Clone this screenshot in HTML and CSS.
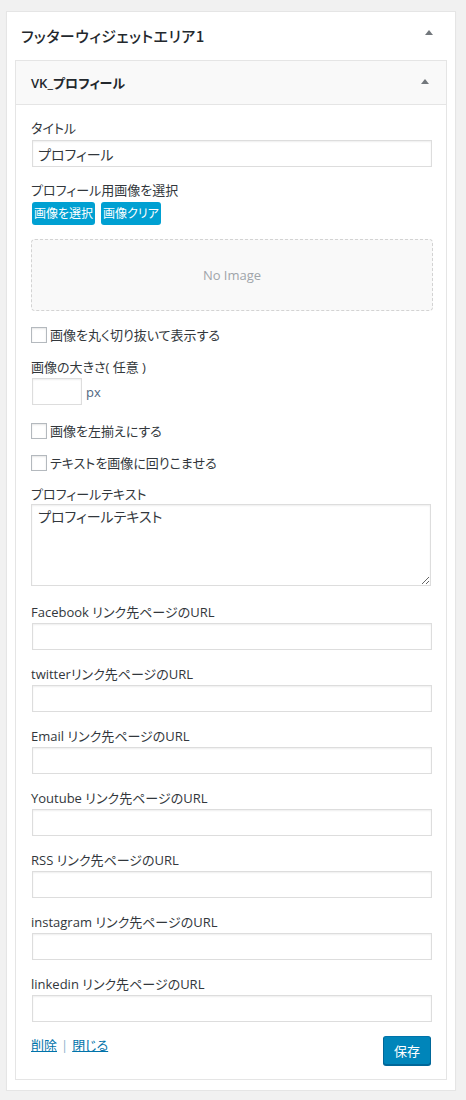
FILE: index.html
```html
<!DOCTYPE html>
<html lang="ja">
<head>
<meta charset="utf-8">
<title>フッターウィジェットエリア1</title>
<link rel="stylesheet" href="styles.css">
</head>
<body>
<div class="page">
  <div class="area">
    <div class="area-head">
      <h2 class="area-title">フッターウィジェットエリア1</h2>
      <span class="arrow arrow-area"></span>
    </div>
    <div class="widget">
      <div class="widget-head">
        <h3 class="widget-title">VK_プロフィール</h3>
        <span class="arrow arrow-widget"></span>
      </div>
      <div class="widget-body">
        <label class="lbl">タイトル</label>
        <input class="text mt3" type="text" value="プロフィール">

        <label class="lbl mt14">プロフィール用画像を選択</label>
        <div class="btns mt3">
          <button class="btn-blue">画像を選択</button>
          <button class="btn-blue">画像クリア</button>
        </div>

        <div class="noimage mt14">No Image</div>

        <label class="check mt16"><input type="checkbox"><span>画像を丸く切り抜いて表示する</span></label>

        <label class="lbl mt15">画像の大きさ( 任意 )</label>
        <div class="size-row mt2">
          <input class="text small" type="text">
          <span class="px">px</span>
        </div>

        <label class="check mt18"><input type="checkbox"><span>画像を左揃えにする</span></label>
        <label class="check mt16"><input type="checkbox"><span>テキストを画像に回りこませる</span></label>

        <label class="lbl mt14">プロフィールテキスト</label>
        <textarea class="area-text mt1">プロフィールテキスト</textarea>

        <label class="lbl mt17">Facebook リンク先ページのURL</label>
        <input class="text mt2" type="text">

        <label class="lbl mt15">twitterリンク先ページのURL</label>
        <input class="text mt2" type="text">

        <label class="lbl mt15">Email リンク先ページのURL</label>
        <input class="text mt2" type="text">

        <label class="lbl mt15">Youtube リンク先ページのURL</label>
        <input class="text mt2" type="text">

        <label class="lbl mt15">RSS リンク先ページのURL</label>
        <input class="text mt2" type="text">

        <label class="lbl mt15">instagram リンク先ページのURL</label>
        <input class="text mt2" type="text">

        <label class="lbl mt15">linkedin リンク先ページのURL</label>
        <input class="text mt2" type="text">

        <div class="widget-foot mt14">
          <div class="links"><a href="#">削除</a><span class="sep">|</span><a href="#">閉じる</a></div>
          <button class="btn-save">保存</button>
        </div>
      </div>
    </div>
  </div>
</div>
</body>
</html>
```

FILE: styles.css
```css
* { box-sizing: border-box; }

html, body {
  margin: 0;
  padding: 0;
  background: #f1f1f1;
}

body {
  font-family: "Open Sans", "Noto Sans CJK JP", sans-serif;
  font-size: 13px;
  color: #32373c;
  font-feature-settings: "palt";
}

.page {
  padding: 11px 11px 0 6px;
}

.area {
  width: 450px;
  background: #fff;
  border: 1px solid #e5e5e5;
  box-shadow: 0 1px 1px rgba(0, 0, 0, 0.04);
  padding: 0 8px 10px 8px;
}

.area-head {
  height: 48px;
  display: flex;
  align-items: center;
  justify-content: space-between;
  padding: 0 14px 0 6px;
}

.area-title {
  margin: 0;
  font-family: "Noto Sans CJK JP", sans-serif;
  font-size: 15px;
  font-weight: 500;
  color: #23282d;
  line-height: 20px;
  letter-spacing: 0.5px;
}

.arrow {
  width: 0;
  height: 0;
  border-left: 4px solid transparent;
  border-right: 4px solid transparent;
  border-bottom: 5px solid #72777c;
}

.arrow-area {
  margin-top: -7px;
}

.widget {
  border: 1px solid #e5e5e5;
  background: #fff;
}

.widget-head {
  height: 44px;
  background: #f9f9f9;
  border-bottom: 1px solid #e5e5e5;
  display: flex;
  align-items: center;
  justify-content: space-between;
  padding: 0 17px 0 15px;
}

.widget-title {
  margin: 0;
  font-size: 13px;
  font-weight: 600;
  color: #23282d;
  line-height: 18px;
}

.arrow-widget {
  margin-top: -2px;
}

.widget-body {
  display: flex;
  flex-direction: column;
  align-items: flex-start;
  padding: 14px 15px 14px 15px;
}

.mt1 { margin-top: 1px; }
.mt2 { margin-top: 2px; }
.mt3 { margin-top: 3px; }
.mt14 { margin-top: 14px; }
.mt15 { margin-top: 15px; }
.mt16 { margin-top: 16px; }
.mt17 { margin-top: 17px; }
.mt18 { margin-top: 18px; }

.lbl {
  display: block;
  line-height: 18px;
  font-size: 13px;
  color: #32373c;
}

.text {
  display: block;
  width: 400px;
  height: 27px;
  margin-left: 1px;
  border: 1px solid #ddd;
  box-shadow: inset 0 1px 2px rgba(0, 0, 0, 0.07);
  background: #fff;
  font-family: "Open Sans", "Noto Sans CJK JP", sans-serif;
  font-feature-settings: "palt";
  font-size: 14px;
  color: #32373c;
  padding: 0 5px;
  outline: none;
}

.text.small {
  width: 50px;
  margin-left: 1px;
}

.btns {
  display: flex;
  gap: 6px;
  margin-left: 1px;
}

.btn-blue {
  height: 23px;
  padding: 0 2px;
  background: #00a0d2;
  color: #fff;
  border: none;
  border-radius: 3px;
  font-family: "Open Sans", "Noto Sans CJK JP", sans-serif;
  font-feature-settings: "palt";
  font-size: 12px;
  line-height: 23px;
}

.noimage {
  width: 402px;
  height: 72px;
  border: 1px dashed #d3d3d3;
  border-radius: 4px;
  background: #f9f9f9;
  display: flex;
  align-items: center;
  justify-content: center;
  color: #a0a5aa;
  font-size: 13px;
}

.check {
  display: flex;
  align-items: center;
  gap: 3px;
  line-height: 16px;
  font-size: 13px;
  color: #32373c;
}

.check input {
  -webkit-appearance: none;
  appearance: none;
  margin: 0;
  width: 16px;
  height: 16px;
  border: 1px solid #b4b9be;
  background: #fff;
  box-shadow: inset 0 1px 2px rgba(0, 0, 0, 0.1);
}

.size-row {
  display: flex;
  align-items: center;
  gap: 4px;
}

.px {
  color: #50677f;
  font-size: 13px;
  line-height: 18px;
}

.area-text {
  display: block;
  width: 400px;
  height: 82px;
  border: 1px solid #ddd;
  box-shadow: inset 0 1px 2px rgba(0, 0, 0, 0.07);
  background: #fff;
  font-family: "Open Sans", "Noto Sans CJK JP", sans-serif;
  font-feature-settings: "palt";
  font-size: 14px;
  line-height: 20px;
  color: #32373c;
  padding: 2px 6px;
  resize: vertical;
  outline: none;
}

.widget-foot {
  width: 400px;
  display: flex;
  justify-content: space-between;
  align-items: flex-start;
}

.links {
  display: flex;
  align-items: center;
  line-height: 18px;
}

.links a {
  color: #0073aa;
  text-decoration: underline;
  font-size: 13px;
}

.sep {
  color: #8fb0cc;
  margin: 0 4px;
}

.btn-save {
  height: 29px;
  width: 48px;
  padding: 0;
  background: #0085ba;
  border: 1px solid #0073aa;
  border-color: #0073aa #006799 #006799;
  border-radius: 3px;
  box-shadow: 0 1px 0 #006799;
  color: #fff;
  font-family: "Open Sans", "Noto Sans CJK JP", sans-serif;
  font-size: 13px;
  line-height: 26px;
}
```
